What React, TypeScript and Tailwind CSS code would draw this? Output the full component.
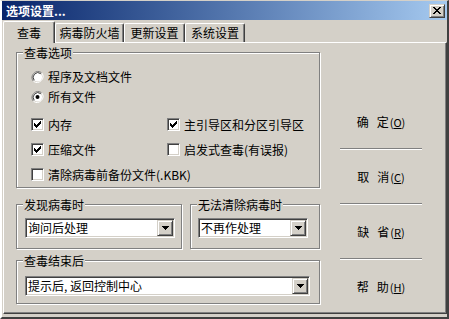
import React from "react";

const raised =
  "border border-t-[#d4d0c8] border-l-[#d4d0c8] border-r-[#404040] border-b-[#404040] shadow-[inset_1px_1px_0_#fff,inset_-1px_-1px_0_#808080]";
const sunken =
  "border border-t-[#808080] border-l-[#808080] border-r-white border-b-white shadow-[inset_1px_1px_0_#404040,inset_-1px_-1px_0_#d4d0c8]";

function Group({
  label,
  className = "",
  children,
}: {
  label: string;
  className?: string;
  children?: React.ReactNode;
}) {
  return (
    <div
      className={
        "relative border border-[#808080] shadow-[inset_1px_1px_0_#fff,1px_1px_0_#fff] " +
        className
      }
    >
      <span className="absolute -top-[6px] left-[6px] px-[1px] bg-[#d4d0c8] leading-[12px]">
        {label}
      </span>
      {children}
    </div>
  );
}

function Check({ checked, label }: { checked?: boolean; label: string }) {
  return (
    <div className="h-[25px] flex items-center gap-[4px]">
      <span className={"w-[13px] h-[13px] bg-white flex items-center justify-center " + sunken}>
        {checked && (
          <svg width="7" height="7" viewBox="0 0 7 7" shapeRendering="crispEdges">
            <path
              d="M0 2h1v3H0z M1 3h1v3H1z M2 4h1v3H2z M3 3h1v3H3z M4 2h1v3H4z M5 1h1v3H5z M6 0h1v3H6z"
              fill="#000"
            />
          </svg>
        )}
      </span>
      <span className="whitespace-nowrap">{label}</span>
    </div>
  );
}

function Radio({ checked, label }: { checked?: boolean; label: string }) {
  return (
    <div className="h-[20px] flex items-center gap-[4px]">
      <svg width="13" height="12" viewBox="0 0 12 12">
        <path d="M10.2 1.8A6 6 0 0 0 1.8 10.2" fill="none" stroke="#808080" strokeWidth="1" />
        <path d="M1.8 10.2A6 6 0 0 0 10.2 1.8" fill="none" stroke="#fff" strokeWidth="1" />
        <circle cx="6" cy="6" r="4.6" fill="#fff" />
        <path d="M9.3 2.7A4.7 4.7 0 0 0 2.7 9.3" fill="none" stroke="#404040" strokeWidth="1" />
        {checked && <circle cx="6" cy="6" r="2" fill="#000" />}
      </svg>
      <span className="whitespace-nowrap">{label}</span>
    </div>
  );
}

function Combo({ value }: { value: string }) {
  return (
    <div className={"h-[20px] p-[1px] bg-white flex " + sunken}>
      <span className="flex-1 pl-[1px] flex items-center whitespace-nowrap">{value}</span>
      <span className={"w-[16px] h-full bg-[#d4d0c8] flex items-center justify-center " + raised}>
        <svg width="7" height="4" viewBox="0 0 7 4" shapeRendering="crispEdges">
          <path d="M0 0h7v1H0z M1 1h5v1H1z M2 2h3v1H2z M3 3h1v1H3z" fill="#000" />
        </svg>
      </span>
    </div>
  );
}

function SideButton({ a, b, k }: { a: string; b: string; k: string }) {
  return (
    <div className="h-[53px] w-[82px] ml-[19px] flex items-center justify-center whitespace-nowrap">
      <span>{a}</span>
      <span className="ml-[8px]">{b}</span>
      <span className="text-[11px] ml-[1px]">
        (<span className="underline">{k}</span>)
      </span>
    </div>
  );
}

function Sep() {
  return <div className="h-[2px] w-[82px] ml-[19px] border-t border-t-[#808080] border-b border-b-white" />;
}

const tabs = [
  { label: "查毒", w: "w-[52px]", active: true },
  { label: "病毒防火墙", w: "w-[69px]" },
  { label: "更新设置", w: "w-[61px]" },
  { label: "系统设置", w: "w-[60px]" },
];

export default function App() {
  return (
    <div className="w-[449px] h-[319px] bg-[#d4d0c8] font-['Noto_Sans_CJK_SC','Noto_Sans',sans-serif] text-[12px] leading-[12px] text-black flex flex-col border-t border-t-[#d4d0c8] border-l-2 border-l-white border-r-2 border-r-[#404040] border-b-2 border-b-[#404040] overflow-hidden">
      {/* title bar */}
      <div className="h-[19px] shrink-0 flex items-center justify-between pl-[4px] pr-[2px] bg-linear-to-r from-[#0a246a] to-[#a6caf0]">
        <span className="text-white font-bold">选项设置...</span>
        <span className={"w-[16px] h-[14px] bg-[#d4d0c8] flex items-center justify-center " + raised}>
          <svg width="8" height="7" viewBox="0 0 8 7" shapeRendering="crispEdges">
            <path
              d="M0 0h2v1H0z M6 0h2v1H6z M1 1h2v1H1z M5 1h2v1H5z M2 2h4v1H2z M3 3h2v1H3z M2 4h4v1H2z M1 5h2v1H1z M5 5h2v1H5z M0 6h2v1H0z M6 6h2v1H6z"
              fill="#000"
            />
          </svg>
        </span>
      </div>

      {/* tabs */}
      <div className="h-[22px] shrink-0 flex items-end pl-[1px]">
        {tabs.map((t) =>
          t.active ? (
            <div
              key={t.label}
              className={
                t.w +
                " h-[22px] -mb-[1px] relative z-10 bg-[#d4d0c8] flex items-center justify-center border-t border-l border-r border-t-white border-l-white border-r-[#404040] shadow-[inset_-1px_0_0_#808080] rounded-t-[2px]"
              }
            >
              {t.label}
            </div>
          ) : (
            <div
              key={t.label}
              className={
                t.w +
                " h-[19px] flex items-center justify-center border-t border-l border-r border-t-white border-l-white border-r-[#404040] shadow-[inset_-1px_0_0_#808080] rounded-t-[2px]"
              }
            >
              {t.label}
            </div>
          )
        )}
      </div>

      {/* panel */}
      <div className="flex-1 ml-[1px] mb-[3px] flex border-t border-l border-r border-b border-t-white border-l-white border-r-[#404040] border-b-[#404040] shadow-[inset_-1px_-1px_0_#808080]">
        <div className="w-[317px] pl-[12px] pt-[9px] flex flex-col">
          <Group label="查毒选项" className="w-[304px] h-[136px] pt-[14px] pl-[14px]">
            <Radio label="程序及文档文件" />
            <Radio checked label="所有文件" />
            <div className="mt-[5px] grid grid-cols-[136px_1fr]">
              <Check checked label="内存" />
              <Check checked label="主引导区和分区引导区" />
              <Check checked label="压缩文件" />
              <Check label="启发式查毒(有误报)" />
              <div className="col-span-2">
                <Check label="清除病毒前备份文件(.KBK)" />
              </div>
            </div>
          </Group>

          <div className="mt-[16px] flex gap-[8px]">
            <Group label="发现病毒时" className="w-[166px] h-[45px] pt-[13px] pl-[8px] pr-[6px]">
              <Combo value="询问后处理" />
            </Group>
            <Group label="无法清除病毒时" className="w-[130px] h-[45px] pt-[13px] pl-[7px] pr-[11px]">
              <Combo value="不再作处理" />
            </Group>
          </div>

          <Group label="查毒结束后" className="mt-[11px] w-[304px] h-[44px] pt-[15px] pl-[8px] pr-[9px]">
            <Combo value="提示后, 返回控制中心" />
          </Group>
        </div>

        <div className="flex-1 pt-[52px] flex flex-col">
          <SideButton a="确" b="定" k="O" />
          <Sep />
          <SideButton a="取" b="消" k="C" />
          <Sep />
          <SideButton a="缺" b="省" k="R" />
          <Sep />
          <SideButton a="帮" b="助" k="H" />
        </div>
      </div>
    </div>
  );
}
